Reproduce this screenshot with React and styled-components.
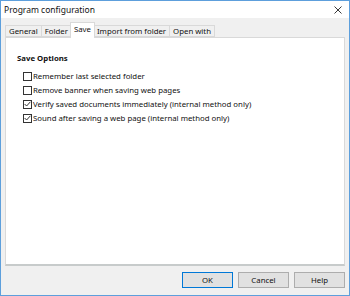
import styled, { createGlobalStyle } from "styled-components";

const GlobalStyle = createGlobalStyle`
  html, body {
    margin: 0;
    padding: 0;
    background: #ffffff;
  }
  * { box-sizing: border-box; }
`

const tabs = ["General", "Folder", "Save", "Import from folder", "Open with"]

const options = [
  { label: "Remember last selected folder", checked: false },
  { label: "Remove banner when saving web pages", checked: false },
  { label: "Verify saved documents immediately (internal method only)", checked: true },
  { label: "Sound after saving a web page (internal method only)", checked: true },
]

function CheckIcon() {
  return (
    <svg width="7" height="6" viewBox="0 0 7 6">
      <path d="M0.6 3 L2.6 5 L6.4 0.8" fill="none" stroke="#333" strokeWidth="1" />
    </svg>
  )
}

function App() {
  return (
    <>
      <GlobalStyle />
      <Window>
        <TitleBar>
          <Title>Program configuration</Title>
          <Close>
            <svg width="8" height="8" viewBox="0 0 8 8">
              <path d="M0.5 0.5 L7.5 7.5 M7.5 0.5 L0.5 7.5" stroke="#222" strokeWidth="0.9" />
            </svg>
          </Close>
        </TitleBar>
        <Body>
          <TabRow>
            {tabs.map(t => (
              <Tab key={t} $active={t === "Save"}>{t}</Tab>
            ))}
          </TabRow>
          <Panel>
            <Heading>Save Options</Heading>
            <OptionList>
              {options.map(o => (
                <Option key={o.label}>
                  <Box>{o.checked && <CheckIcon />}</Box>
                  {o.label}
                </Option>
              ))}
            </OptionList>
          </Panel>
          <ButtonRow>
            <Button $default>OK</Button>
            <Button>Cancel</Button>
            <Button>Help</Button>
          </ButtonRow>
        </Body>
      </Window>
    </>
  )
}

export default App

const Window = styled.div`
  width: 350px;
  height: 296px;
  border: 1px solid #5d9fdc;
  background: #f0f0f0;
  display: flex;
  flex-direction: column;
  font-family: "Noto Sans", sans-serif;
  font-size: 7.8px;
  color: #111;
`

const TitleBar = styled.div`
  height: 17px;
  background: #ffffff;
  display: flex;
  align-items: center;
  justify-content: space-between;
  padding: 0 7px 0 3px;
`

const Title = styled.span`
  font-size: 8.5px;
  color: #111;
`

const Close = styled.span`
  display: flex;
  align-items: center;
`

const Body = styled.div`
  flex: 1;
  display: flex;
  flex-direction: column;
  padding: 4px 4px 7px 3px;
`

const TabRow = styled.div`
  display: flex;
  align-items: flex-end;
  height: 15px;
  padding-left: 1px;
  position: relative;
  z-index: 1;
`

const Tab = styled.div`
  height: ${p => (p.$active ? "16px" : "12px")};
  margin: ${p => (p.$active ? "0 -1px -1px -2px" : "0 0 0 -1px")};
  padding: 0 3px;
  padding-bottom: ${p => (p.$active ? "3px" : "0")};
  display: flex;
  align-items: center;
  border: 1px solid #d9d9d9;
  border-bottom: ${p => (p.$active ? "none" : "1px solid #d9d9d9")};
  background: ${p => (p.$active ? "#ffffff" : "#f0f0f0")};
  position: relative;
  z-index: ${p => (p.$active ? 2 : 1)};
  &:first-child { margin-left: 0; }
`

const Panel = styled.div`
  flex: 1;
  margin-left: 1px;
  background: #ffffff;
  border: 1px solid #d9d9d9;
  border-bottom: 2px solid #c7cbcb;
  padding: 15px 11px;
`

const Heading = styled.div`
  font-weight: bold;
  margin-bottom: 8px;
`

const OptionList = styled.div`
  display: flex;
  flex-direction: column;
  gap: 4px;
  padding-left: 6px;
`

const Option = styled.label`
  display: flex;
  align-items: center;
  gap: 1px;
  height: 10px;
  white-space: nowrap;
`

const Box = styled.span`
  width: 9px;
  height: 9px;
  border: 1px solid #333;
  background: #fff;
  display: flex;
  align-items: center;
  justify-content: center;
`

const ButtonRow = styled.div`
  display: flex;
  justify-content: flex-end;
  gap: 5px;
  margin-top: 6px;
`

const Button = styled.button`
  width: 51px;
  height: 16px;
  padding: 0;
  font-family: "Noto Sans", sans-serif;
  font-size: 7.8px;
  color: #111;
  background: #e1e1e1;
  border: 1px solid ${p => (p.$default ? "#0078d7" : "#adadad")};
`
